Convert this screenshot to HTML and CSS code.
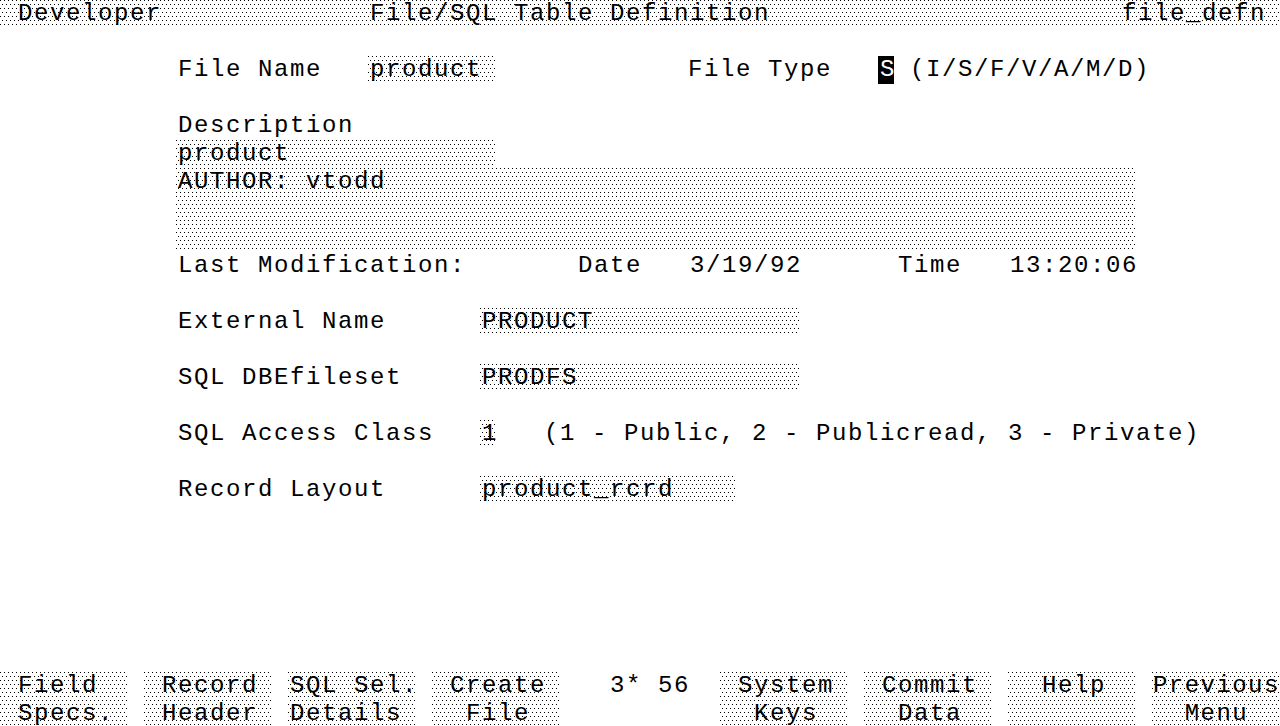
FILE: index.html
```html
<!DOCTYPE html>
<html lang="en">
<head>
<meta charset="utf-8">
<title>File/SQL Table Definition</title>
<link rel="stylesheet" href="styles.css">
</head>
<body>
<div class="screen">
<div class="row shade"> Developer             File/SQL Table Definition                      file_defn</div>
<div class="row"></div>
<div class="row">           File Name   <span class="field shade">product </span>            File Type   <span class="field cursor">S</span> (I/S/F/V/A/M/D)</div>
<div class="row"></div>
<div class="row">           Description</div>
<div class="row">           <span class="field shade">product             </span></div>
<div class="row">           <span class="field shade">AUTHOR: vtodd                                               </span></div>
<div class="row">           <span class="field shade">                                                            </span></div>
<div class="row">           <span class="field shade">                                                            </span></div>
<div class="row">           Last Modification:       Date   3/19/92      Time   13:20:06</div>
<div class="row"></div>
<div class="row">           External Name      <span class="field shade">PRODUCT             </span></div>
<div class="row"></div>
<div class="row">           SQL DBEfileset     <span class="field shade">PRODFS              </span></div>
<div class="row"></div>
<div class="row">           SQL Access Class   <span class="field shade">1</span>   (1 - Public, 2 - Publicread, 3 - Private)</div>
<div class="row"></div>
<div class="row">           Record Layout      <span class="field shade">product_rcrd    </span></div>
<div class="row"></div>
<div class="row"></div>
<div class="row"></div>
<div class="row"></div>
<div class="row"></div>
<div class="row"></div>
<div class="keys">
  <div class="key shade"><div class="kline"> Field</div><div class="kline"> Specs.</div></div>
  <div class="key shade"><div class="kline"> Record</div><div class="kline"> Header</div></div>
  <div class="key shade"><div class="kline">SQL Sel.</div><div class="kline">Details</div></div>
  <div class="key shade"><div class="kline"> Create</div><div class="kline">  File</div></div>
  <div class="key"><div class="kline">  3* 56</div><div class="kline"></div></div>
  <div class="key shade"><div class="kline"> System</div><div class="kline">  Keys</div></div>
  <div class="key shade"><div class="kline"> Commit</div><div class="kline">  Data</div></div>
  <div class="key shade"><div class="kline">  Help</div><div class="kline"></div></div>
  <div class="key key-edge shade"><div class="kline">Previous</div><div class="kline">  Menu</div></div>
</div>
</div>
</body>
</html>
```
FILE: styles.css
```css
html, body {
  margin: 0;
  padding: 0;
  background: #fff;
  overflow: hidden;
}

.screen {
  width: 1280px;
  height: 726px;
  overflow: hidden;
  font-family: "Liberation Mono", "DejaVu Sans Mono", monospace;
  font-size: 24px;
  letter-spacing: 1.5977px;
  line-height: 28px;
  color: #000;
}

/* each terminal row is 28px tall; glyphs sit 2px into their 16px cell */
.row {
  box-sizing: border-box;
  height: 28px;
  padding-left: 2px;
  white-space: pre;
}

.shade {
  background-color: #fff;
  background-image:
    conic-gradient(from 270deg at 1px 1px, #000 25%, #0000 0),
    conic-gradient(from 270deg at 1px 1px, #000 25%, #0000 0);
  background-size: 4px 8px, 4px 8px;
  background-position: 0 0, 2px 4px;
}

.field {
  display: inline-block;
  height: 28px;
  vertical-align: top;
  white-space: pre;
  margin: 0 -2px 0 -2px;
  padding-left: 2px;
  clip-path: inset(0 2px 0 0);
}

.cursor {
  background: #000;
  color: #fff;
}

.keys {
  display: flex;
  gap: 16px;
}

.key {
  width: 128px;
  flex: none;
}

.kline {
  box-sizing: border-box;
  height: 28px;
  padding-left: 2px;
  white-space: pre;
}

/* last softkey touches the right screen edge */
.key-edge .kline {
  padding-left: 1px;
  letter-spacing: 1.45px;
}
```
